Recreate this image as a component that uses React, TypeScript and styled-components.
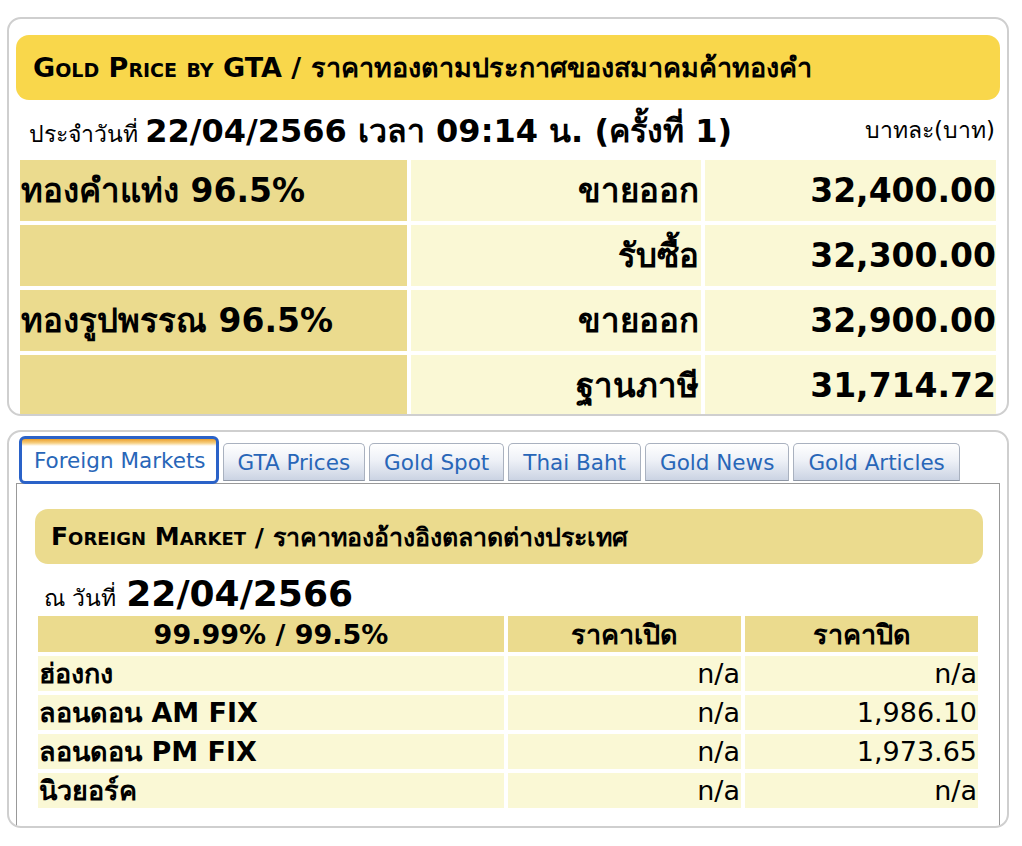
import styled, { createGlobalStyle, css } from 'styled-components';

const GlobalStyle = createGlobalStyle`
	html, body {
		margin: 0;
		padding: 0;
		background: #ffffff;
	}
	body {
		font-family: 'DejaVu Sans', Verdana, Tahoma, sans-serif;
		color: #000000;
	}
`;

type PriceRow = {
	label: string;
	kind: string;
	price: string;
};

const gtaRows: PriceRow[] = [
	{ label: 'ทองคำแท่ง 96.5%', kind: 'ขายออก', price: '32,400.00' },
	{ label: '', kind: 'รับซื้อ', price: '32,300.00' },
	{ label: 'ทองรูปพรรณ 96.5%', kind: 'ขายออก', price: '32,900.00' },
	{ label: '', kind: 'ฐานภาษี', price: '31,714.72' },
];

type MarketRow = {
	market: string;
	open: string;
	close: string;
};

const marketRows: MarketRow[] = [
	{ market: 'ฮ่องกง', open: 'n/a', close: 'n/a' },
	{ market: 'ลอนดอน AM FIX', open: 'n/a', close: '1,986.10' },
	{ market: 'ลอนดอน PM FIX', open: 'n/a', close: '1,973.65' },
	{ market: 'นิวยอร์ค', open: 'n/a', close: 'n/a' },
];

const tabs = ['Foreign Markets', 'GTA Prices', 'Gold Spot', 'Thai Baht', 'Gold News', 'Gold Articles'];

const App = () => {
	return (
		<>
			<GlobalStyle />
			<Page>
				<Panel $height={399}>
					<GoldHeader>
						<SmallCaps>Gold Price by GTA</SmallCaps>&nbsp;/ ราคาทองตามประกาศของสมาคมค้าทองคำ
					</GoldHeader>
					<DateRow>
						<DateText>
							ประจำวันที่ <DateStrong>22/04/2566 เวลา 09:14 น. (ครั้งที่ 1)</DateStrong>
						</DateText>
						<UnitText>บาทละ(บาท)</UnitText>
					</DateRow>
					<GtaTable>
						{gtaRows.map((row, i) => (
							<GtaRow key={i}>
								<GtaCell $label>{row.label}</GtaCell>
								<GtaCell>{row.kind}</GtaCell>
								<GtaCell $last>{row.price}</GtaCell>
							</GtaRow>
						))}
					</GtaTable>
				</Panel>

				<Panel $height={398} $gap>
					<TabBar>
						{tabs.map((tab, i) => (
							<Tab key={tab} $active={i === 0}>
								{tab}
							</Tab>
						))}
					</TabBar>
					<TabContent>
						<TanHeader>
							<SmallCaps>Foreign Market</SmallCaps>&nbsp;/ ราคาทองอ้างอิงตลาดต่างประเทศ
						</TanHeader>
						<MarketDate>
							ณ วันที่ <MarketDateStrong>22/04/2566</MarketDateStrong>
						</MarketDate>
						<MarketTable>
							<MarketHead>99.99% / 99.5%</MarketHead>
							<MarketHead>ราคาเปิด</MarketHead>
							<MarketHead>ราคาปิด</MarketHead>
							{marketRows.map((row) => (
								<MarketRowGroup key={row.market}>
									<MarketCell $bold>{row.market}</MarketCell>
									<MarketCell $align="right">{row.open}</MarketCell>
									<MarketCell $align="right">{row.close}</MarketCell>
								</MarketRowGroup>
							))}
						</MarketTable>
					</TabContent>
				</Panel>
			</Page>
		</>
	);
};

const Page = styled.div`
	padding: 17px 13px 0 7px;
	width: 1002px;
	display: flex;
	flex-direction: column;
`;

const Panel = styled.div<{ $height: number; $gap?: boolean }>`
	box-sizing: border-box;
	height: ${(p) => p.$height}px;
	margin-top: ${(p) => (p.$gap ? '14px' : '0')};
	border: 2px solid #cfcfcf;
	border-radius: 14px;
	padding: ${(p) => (p.$gap ? '4px 7px 0 7px' : '16px 7px 0 7px')};
	overflow: hidden;
	display: flex;
	flex-direction: column;
`;

const SmallCaps = styled.span`
	font-variant: small-caps;
`;

const GoldHeader = styled.div`
	height: 65px;
	flex-shrink: 0;
	background: #f9d74b;
	border-radius: 13px;
	padding-left: 17px;
	display: flex;
	align-items: center;
	font-size: 27px;
	font-weight: bold;
	white-space: nowrap;
`;

const DateRow = styled.div`
	height: 56px;
	flex-shrink: 0;
	padding: 4px 5px 0 13px;
	box-sizing: border-box;
	display: flex;
	align-items: center;
	justify-content: space-between;
	white-space: nowrap;
`;

const DateText = styled.div`
	font-size: 23px;
`;

const DateStrong = styled.span`
	font-size: 32px;
	font-weight: bold;
`;

const UnitText = styled.div`
	font-size: 23px;
`;

const GtaTable = styled.div`
	display: grid;
	grid-template-columns: 387px 290px 1fr;
	grid-auto-rows: 61px;
	gap: 4px;
	padding: 4px 4px 0 4px;
`;

const GtaRow = styled.div`
	display: contents;
`;

const GtaCell = styled.div<{ $label?: boolean; $last?: boolean }>`
	background: ${(p) => (p.$label ? '#ebdb8e' : '#faf8d5')};
	display: flex;
	align-items: center;
	justify-content: ${(p) => (p.$label ? 'flex-start' : 'flex-end')};
	padding: ${(p) => (p.$label ? '0 0 0 1px' : p.$last ? '0' : '0 2px 0 0')};
	font-size: 33px;
	font-weight: bold;
	white-space: nowrap;
`;

const TabBar = styled.div`
	height: 48px;
	flex-shrink: 0;
	margin-left: 3px;
	display: flex;
	align-items: flex-end;
	gap: 4px;
	position: relative;
	z-index: 1;
`;

const Tab = styled.div<{ $active?: boolean }>`
	box-sizing: border-box;
	font-size: 21.5px;
	color: #2866b8;
	white-space: nowrap;
	display: flex;
	align-items: center;
	justify-content: center;
	${(p) =>
		p.$active
			? css`
					height: 48px;
					padding: 0 10px 0 12px;
					border: 3px solid #2a62c8;
					border-radius: 6px;
					background: linear-gradient(
						to bottom,
						#eca02c 0px,
						#f6cf82 4px,
						#ffffff 7px,
						#ffffff 100%
					);
				`
			: css`
					height: 38px;
					margin-bottom: 3px;
					padding: 0 14px;
					border: 1px solid #a9b1bf;
					border-bottom-color: #8e96a4;
					border-radius: 5px 5px 0 0;
					background: linear-gradient(to bottom, #ffffff 0%, #eef1f7 45%, #cbd3e3 100%);
				`}
`;

const TabContent = styled.div`
	flex: 1;
	margin-top: -1px;
	border: 1px solid #999999;
	border-bottom: none;
	padding: 25px 16px 0 18px;
	display: flex;
	flex-direction: column;
`;

const TanHeader = styled.div`
	height: 55px;
	flex-shrink: 0;
	background: #ebdb8e;
	border-radius: 13px;
	padding-left: 16px;
	display: flex;
	align-items: center;
	font-size: 25px;
	font-weight: bold;
	white-space: nowrap;
`;

const MarketDate = styled.div`
	height: 52px;
	padding: 9px 0 0 9px;
	box-sizing: border-box;
	display: flex;
	align-items: baseline;
	font-size: 23px;
	white-space: nowrap;
`;

const MarketDateStrong = styled.span`
	margin-left: 10px;
	font-size: 36px;
	font-weight: bold;
`;

const MarketTable = styled.div`
	display: grid;
	grid-template-columns: 466px 233px 233px;
	grid-template-rows: 36px;
	grid-auto-rows: 35px;
	gap: 4px;
	padding: 0 0 0 3px;
`;

const MarketRowGroup = styled.div`
	display: contents;
`;

const MarketHead = styled.div`
	background: #ebdb8e;
	display: flex;
	align-items: center;
	justify-content: center;
	font-size: 27px;
	font-weight: bold;
	white-space: nowrap;
`;

const MarketCell = styled.div<{ $bold?: boolean; $align?: 'right' }>`
	background: #faf8d5;
	display: flex;
	align-items: center;
	justify-content: ${(p) => (p.$align === 'right' ? 'flex-end' : 'flex-start')};
	padding: 0 1px;
	font-size: 27px;
	font-weight: ${(p) => (p.$bold ? 'bold' : 'normal')};
	white-space: nowrap;
`;

export default App;
